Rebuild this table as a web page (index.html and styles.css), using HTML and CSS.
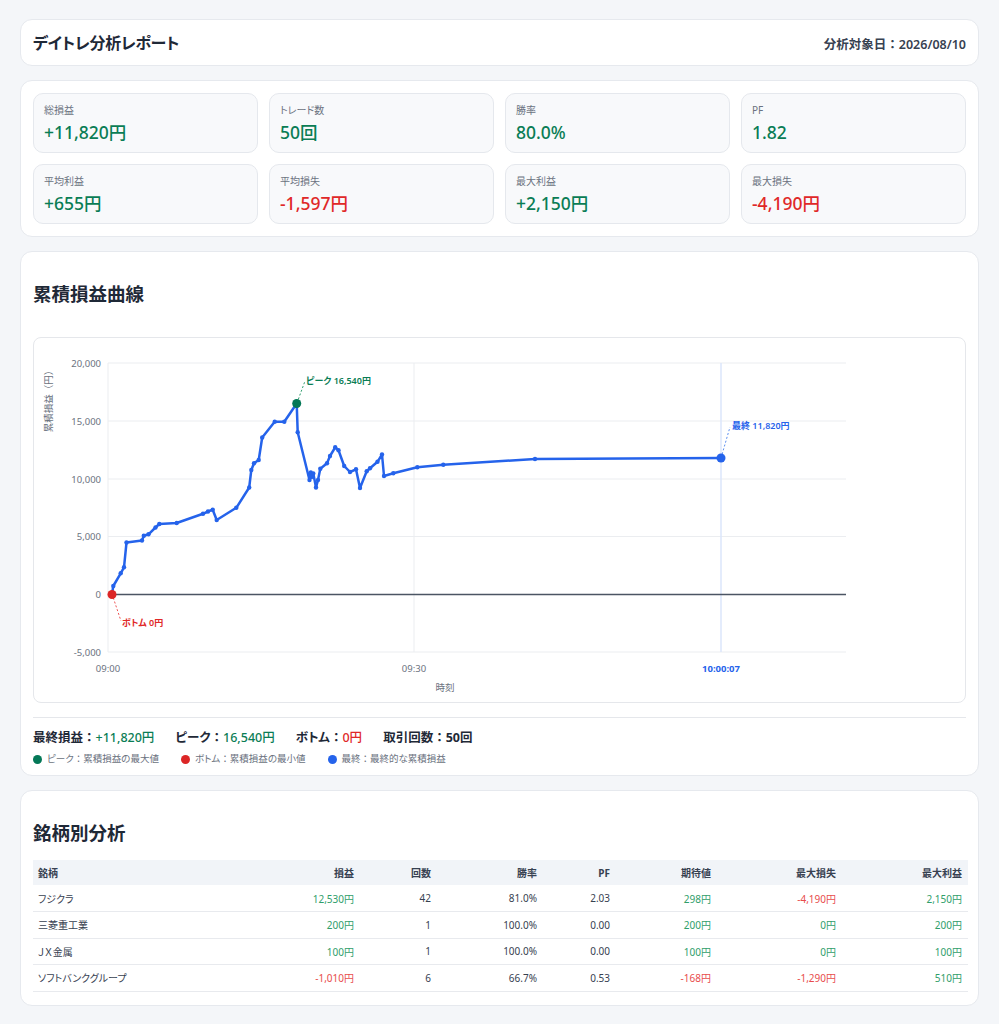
FILE: index.html
```html
<!DOCTYPE html>
<html lang="ja">
<head>
<meta charset="utf-8">
<title>デイトレ分析レポート</title>
<link rel="stylesheet" href="styles.css">
</head>
<body>
<div class="page">
  <header class="card header">
    <h1 class="title">デイトレ分析レポート</h1>
    <div class="date">分析対象日<span class="colon">：</span>2026/08/10</div>
  </header>

  <section class="card stats">
    <div class="stat-grid">
      <div class="stat"><div class="stat-label">総損益</div><div class="stat-value pos">+11,820円</div></div>
      <div class="stat"><div class="stat-label">トレード数</div><div class="stat-value pos">50回</div></div>
      <div class="stat"><div class="stat-label">勝率</div><div class="stat-value pos">80.0%</div></div>
      <div class="stat"><div class="stat-label">PF</div><div class="stat-value pos">1.82</div></div>
      <div class="stat"><div class="stat-label">平均利益</div><div class="stat-value pos">+655円</div></div>
      <div class="stat"><div class="stat-label">平均損失</div><div class="stat-value neg">-1,597円</div></div>
      <div class="stat"><div class="stat-label">最大利益</div><div class="stat-value pos">+2,150円</div></div>
      <div class="stat"><div class="stat-label">最大損失</div><div class="stat-value neg">-4,190円</div></div>
    </div>
  </section>

  <section class="card chart-card">
    <h2 class="section-title">累積損益曲線</h2>
    <div class="chart-box">
      <svg class="chart" width="933" height="364" viewBox="34 338 933 364" xmlns="http://www.w3.org/2000/svg">
        <g class="grid">
          <line x1="108" y1="363" x2="846" y2="363"/>
          <line x1="108" y1="421" x2="846" y2="421"/>
          <line x1="108" y1="479" x2="846" y2="479"/>
          <line x1="108" y1="536.5" x2="846" y2="536.5"/>
          <line x1="108" y1="652" x2="846" y2="652"/>
          <line x1="108" y1="363" x2="108" y2="652"/>
          <line x1="414" y1="363" x2="414" y2="652"/>
        </g>
        <line class="grid-final" x1="721" y1="363" x2="721" y2="652"/>
        <line class="zero" x1="108" y1="594.5" x2="846" y2="594.5"/>
        <g class="ytick">
          <text x="101" y="366.5">20,000</text>
          <text x="101" y="424.5">15,000</text>
          <text x="101" y="482.5">10,000</text>
          <text x="101" y="540">5,000</text>
          <text x="101" y="598">0</text>
          <text x="101" y="655.5">-5,000</text>
        </g>
        <g class="xtick">
          <text x="108" y="671.5">09:00</text>
          <text x="414" y="671.5">09:30</text>
          <text class="xtick-final" x="721" y="671.5">10:00:07</text>
        </g>
        <text class="axis-title" x="445" y="691">時刻</text>
        <text class="axis-title axis-y" transform="translate(52 399) rotate(-90)">累積損益（円）</text>

        <polyline class="curve" points="112,594 113.3,586 120.7,573.3 124,567.3 126.5,542.5 142,540.5 143.8,535.7 148.5,534.3 155.5,527.5 159.3,524 176.7,523 203,513.8 208,511.5 212.7,509.7 216.7,520 236.3,507.8 249.2,487.5 251.3,470 254,463.3 258.7,460 262.2,437.5 274.7,421.8 284.3,421.7 296.7,403.5 297.7,432.3 309.5,480 310.8,472.5 312,478 313.3,473.5 316,487.5 318,480 320.3,468.7 327,463.3 330,456 335.2,447.3 338.5,450.3 344.2,466 350,472 356,469.3 360,488 366.7,471.3 370,468.3 377.5,461.8 382,454.5 384,476 393.3,473.3 417.3,467.3 443.3,464.8 535,459 721,458"/>
        <g class="marks">
          <circle cx="113.3" cy="586" r="2.2"/><circle cx="120.7" cy="573.3" r="2.2"/><circle cx="124" cy="567.3" r="2.2"/><circle cx="126.5" cy="542.5" r="2.2"/><circle cx="142" cy="540.5" r="2.2"/><circle cx="143.8" cy="535.7" r="2.2"/><circle cx="148.5" cy="534.3" r="2.2"/><circle cx="155.5" cy="527.5" r="2.2"/><circle cx="159.3" cy="524" r="2.2"/><circle cx="176.7" cy="523" r="2.2"/><circle cx="203" cy="513.8" r="2.2"/><circle cx="208" cy="511.5" r="2.2"/><circle cx="212.7" cy="509.7" r="2.2"/><circle cx="216.7" cy="520" r="2.2"/><circle cx="236.3" cy="507.8" r="2.2"/><circle cx="249.2" cy="487.5" r="2.2"/><circle cx="251.3" cy="470" r="2.2"/><circle cx="254" cy="463.3" r="2.2"/><circle cx="258.7" cy="460" r="2.2"/><circle cx="262.2" cy="437.5" r="2.2"/><circle cx="274.7" cy="421.8" r="2.2"/><circle cx="284.3" cy="421.7" r="2.2"/><circle cx="297.7" cy="432.3" r="2.2"/><circle cx="309.5" cy="480" r="2.2"/><circle cx="310.8" cy="472.5" r="2.2"/><circle cx="313.3" cy="473.5" r="2.2"/><circle cx="316" cy="487.5" r="2.2"/><circle cx="318" cy="480" r="2.2"/><circle cx="320.3" cy="468.7" r="2.2"/><circle cx="327" cy="463.3" r="2.2"/><circle cx="330" cy="456" r="2.2"/><circle cx="335.2" cy="447.3" r="2.2"/><circle cx="338.5" cy="450.3" r="2.2"/><circle cx="344.2" cy="466" r="2.2"/><circle cx="350" cy="472" r="2.2"/><circle cx="356" cy="469.3" r="2.2"/><circle cx="360" cy="488" r="2.2"/><circle cx="366.7" cy="471.3" r="2.2"/><circle cx="370" cy="468.3" r="2.2"/><circle cx="377.5" cy="461.8" r="2.2"/><circle cx="382" cy="454.5" r="2.2"/><circle cx="384" cy="476" r="2.2"/><circle cx="393.3" cy="473.3" r="2.2"/><circle cx="417.3" cy="467.3" r="2.2"/><circle cx="443.3" cy="464.8" r="2.2"/><circle cx="535" cy="459" r="2.2"/>
        </g>

        <line class="lead lead-peak" x1="297" y1="403" x2="305" y2="381"/>
        <circle class="dot-peak" cx="296.7" cy="403.5" r="4.5"/>
        <text class="note note-peak" x="306" y="384">ピーク 16,540円</text>

        <line class="lead lead-bottom" x1="112" y1="594" x2="121" y2="621"/>
        <circle class="dot-bottom" cx="112" cy="594.5" r="4.5"/>
        <text class="note note-bottom" x="122" y="626">ボトム 0円</text>

        <line class="lead lead-final" x1="721" y1="458" x2="730" y2="427"/>
        <circle class="dot-final" cx="721" cy="458" r="4.5"/>
        <text class="note note-final" x="732" y="429">最終 11,820円</text>
      </svg>
    </div>
    <div class="summary">
      <span class="sum-item">最終損益<span class="colon">：</span><span class="pos">+11,820円</span></span>
      <span class="sum-item">ピーク<span class="colon">：</span><span class="pos">16,540円</span></span>
      <span class="sum-item">ボトム<span class="colon">：</span><span class="neg">0円</span></span>
      <span class="sum-item">取引回数<span class="colon">：</span>50回</span>
    </div>
    <div class="legend">
      <span class="legend-item"><span class="legend-dot dot-g"></span><span>ピーク<span class="colon">：</span>累積損益の最大値</span></span>
      <span class="legend-item"><span class="legend-dot dot-r"></span><span>ボトム<span class="colon">：</span>累積損益の最小値</span></span>
      <span class="legend-item"><span class="legend-dot dot-b"></span><span>最終<span class="colon">：</span>最終的な累積損益</span></span>
    </div>
  </section>

  <section class="card table-card">
    <h2 class="section-title">銘柄別分析</h2>
    <table class="symbols">
      <colgroup>
        <col class="c-name"><col class="c-pl"><col class="c-cnt"><col class="c-win"><col class="c-pf"><col class="c-exp"><col class="c-maxl"><col class="c-maxp">
      </colgroup>
      <thead>
        <tr><th class="l">銘柄</th><th>損益</th><th>回数</th><th>勝率</th><th>PF</th><th>期待値</th><th>最大損失</th><th>最大利益</th></tr>
      </thead>
      <tbody>
        <tr><td class="l">フジクラ</td><td class="pos">12,530円</td><td>42</td><td>81.0%</td><td>2.03</td><td class="pos">298円</td><td class="neg">-4,190円</td><td class="pos">2,150円</td></tr>
        <tr><td class="l">三菱重工業</td><td class="pos">200円</td><td>1</td><td>100.0%</td><td>0.00</td><td class="pos">200円</td><td class="pos">0円</td><td class="pos">200円</td></tr>
        <tr><td class="l">ＪＸ金属</td><td class="pos">100円</td><td>1</td><td>100.0%</td><td>0.00</td><td class="pos">100円</td><td class="pos">0円</td><td class="pos">100円</td></tr>
        <tr><td class="l">ソフトバンクグループ</td><td class="neg">-1,010円</td><td>6</td><td>66.7%</td><td>0.53</td><td class="neg">-168円</td><td class="neg">-1,290円</td><td class="pos">510円</td></tr>
      </tbody>
    </table>
  </section>
</div>
</body>
</html>
```

FILE: styles.css
```css
* { box-sizing: border-box; }
html, body { margin: 0; padding: 0; }
body {
  background: #f4f6f9;
  font-family: "Noto Sans", "Noto Sans CJK JP", sans-serif;
  font-feature-settings: "palt" 1;
  color: #1f2937;
}
.colon { font-feature-settings: normal; }
.page {
  padding: 19px 20px 20px;
  display: flex;
  flex-direction: column;
  gap: 14px;
}
.card {
  background: #ffffff;
  border: 1px solid #e6e9ee;
  border-radius: 12px;
  padding: 12px;
}
.header {
  display: flex;
  justify-content: space-between;
  align-items: baseline;
  padding: 12px 12px 11px;
}
.title {
  margin: 0;
  font-size: 16px;
  line-height: 22px;
  font-weight: 700;
  letter-spacing: -0.3px;
  color: #1f2937;
}
.date {
  font-size: 12.5px;
  font-weight: 600;
  color: #374151;
}
.stats { padding: 12px; }
.stat-grid {
  display: grid;
  grid-template-columns: repeat(4, 1fr);
  gap: 11px;
}
.stat {
  background: #f8f9fb;
  border: 1px solid #e5e8ed;
  border-radius: 10px;
  padding: 8px 10px 7px;
  height: 60px;
}
.stat-label {
  font-size: 10px;
  line-height: 16px;
  color: #6b7280;
}
.stat-value {
  font-size: 17.5px;
  line-height: 26px;
  font-weight: 500;
  margin-top: 1px;
}
.pos { color: #0a7d55; }
.neg { color: #e02828; }

.section-title {
  margin: 17px 0 0;
  font-size: 18.5px;
  line-height: 26px;
  font-weight: 700;
  color: #1f2937;
}
.chart-card { padding-bottom: 8px; }
.chart-box {
  margin-top: 30px;
  border: 1px solid #e5e7eb;
  border-radius: 8px;
  background: #fff;
}
.chart { display: block; }
.grid line { stroke: #ebedf0; stroke-width: 1; }
.grid-final { stroke: #dbe6fb; stroke-width: 1.5; }
.zero { stroke: #4b5563; stroke-width: 1.3; }
.ytick text {
  font-size: 9.5px;
  fill: #6b7280;
  text-anchor: end;
  font-family: "Noto Sans", sans-serif;
}
.xtick text {
  font-size: 9.5px;
  fill: #6b7280;
  text-anchor: middle;
  font-family: "Noto Sans", sans-serif;
}
.xtick .xtick-final { fill: #2563eb; font-weight: 700; }
.axis-title {
  font-size: 9.5px;
  fill: #6b7280;
  text-anchor: middle;
}
.axis-y { font-feature-settings: normal; }
.curve {
  fill: none;
  stroke: #2563eb;
  stroke-width: 2.5;
  stroke-linejoin: round;
  stroke-linecap: round;
}
.marks circle { fill: #2563eb; }
.lead { stroke-width: 1; stroke-dasharray: 2 2; }
.lead-peak { stroke: #2f9e6e; }
.lead-bottom { stroke: #ef5555; }
.lead-final { stroke: #5b8ef0; }
.dot-peak { fill: #047857; }
.dot-bottom { fill: #dc2626; }
.dot-final { fill: #2563eb; }
.note { font-size: 9px; font-weight: 600; }
.note-peak { fill: #0a7d55; }
.note-bottom { fill: #e02828; }
.note-final { fill: #2563eb; }

.summary {
  margin-top: 14px;
  border-top: 1px solid #e5e7eb;
  padding-top: 11px;
  display: flex;
  gap: 21px;
  font-size: 12.5px;
  line-height: 18px;
  font-weight: 700;
  color: #1f2937;
}
.summary .pos, .summary .neg { font-weight: 500; }
.legend {
  margin-top: 4px;
  display: flex;
  gap: 22px;
  font-size: 9.5px;
  line-height: 16px;
  color: #6b7280;
}
.legend-item { display: flex; align-items: center; gap: 5px; }
.legend-dot {
  width: 9px;
  height: 9px;
  border-radius: 50%;
  display: inline-block;
}
.dot-g { background: #047857; }
.dot-r { background: #dc2626; }
.dot-b { background: #2563eb; }

.table-card { padding-bottom: 13px; }
.symbols {
  margin-top: 14px;
  width: 100%;
  border-collapse: collapse;
  table-layout: fixed;
  font-size: 10px;
}
.c-name { width: 250px; }
.c-pl { width: 77px; }
.c-cnt { width: 77px; }
.c-win { width: 106px; }
.c-pf { width: 73px; }
.c-exp { width: 101px; }
.c-maxl { width: 125px; }
.c-maxp { width: 126px; }
.symbols th {
  background: #f1f4f8;
  height: 25px;
  padding: 0 6px;
  text-align: right;
  font-weight: 700;
  color: #374151;
}
.symbols td {
  height: 26.5px;
  padding: 0 6px;
  text-align: right;
  border-bottom: 1px solid #e8eaee;
  color: #374151;
}
.symbols .l { text-align: left; padding-left: 5px; }
.symbols td.pos { color: #2f9e6a; }
.symbols td.neg { color: #e84c4c; }
```
